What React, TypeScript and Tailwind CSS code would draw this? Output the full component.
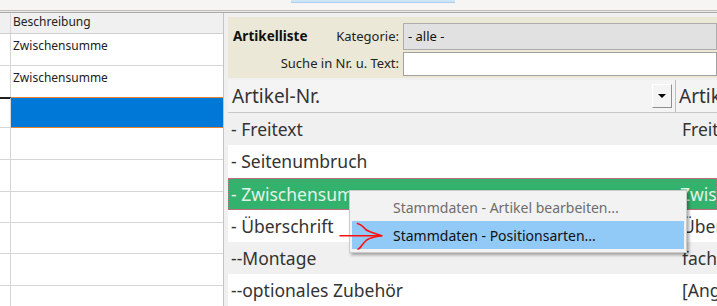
import React from "react";

const leftRows = [
  { h: "h-[32px]", text: "Zwischensumme", kind: "normal" },
  { h: "h-[31px]", text: "Zwischensumme", kind: "last" },
  { h: "h-[31px]", text: "", kind: "selected" },
  { h: "h-[32px]", text: "", kind: "normal" },
  { h: "h-[32px]", text: "", kind: "normal" },
  { h: "h-[31px]", text: "", kind: "normal" },
  { h: "h-[31px]", text: "", kind: "normal" },
  { h: "h-[32px]", text: "", kind: "normal" },
  { h: "h-[32px]", text: "", kind: "normal" },
];

const rightRows = [
  { h: "h-[32px]", bg: "bg-[#f0f0f0]", a: "- Freitext", b: "Freitext", green: false },
  { h: "h-[33px]", bg: "bg-white", a: "- Seitenumbruch", b: "", green: false },
  { h: "h-[32px]", bg: "bg-[#32b26c]", a: "- Zwischensumme", b: "Zwischensumme", green: true },
  { h: "h-[32px]", bg: "bg-white", a: "- Überschrift", b: "Überschrift", green: false },
  { h: "h-[32px]", bg: "bg-[#f0f0f0]", a: "--Montage", b: "fachgerechte Montage", green: false },
  { h: "h-[33px]", bg: "bg-white", a: "--optionales Zubehör", b: "[Angebot]", green: false },
];

export default function App() {
  return (
    <div className="relative w-[717px] h-[306px] overflow-hidden bg-[#f0f0f0] font-['Noto_Sans',sans-serif] text-[#333333]">
      {/* top strip */}
      <div className="h-[10px] bg-[#f6f5f3] flex">
        <div className="ml-[291px] w-[164px] h-[3px] bg-[#cde5f8] border-b border-[#a9d0f0]" />
      </div>
      <div className="h-[3px] border-y border-t-[#bdbdbd] border-b-[#a9a9a9] bg-[#e8e8e8]" />

      <div className="flex h-[293px]">
        {/* left panel */}
        <div className="w-[224px] shrink-0 border-r border-[#c4c4c4] bg-white flex flex-col">
          <div className="h-[21px] shrink-0 flex border-b border-[#d0d0d0] bg-[#f0f0f0] text-[12px] leading-none">
            <div className="w-[11px] border-r border-[#d6d6d6]" />
            <div className="pl-[2px] pt-[3px] text-[#222]">Beschreibung</div>
          </div>
          {leftRows.map((r, i) => (
            <div key={i} className={`${r.h} flex shrink-0`}>
              {r.kind === "selected" ? (
                <>
                  <div className="w-[11px] border-r border-[#d6d6d6] border-t-2 border-t-[#1f1f1f] border-b border-b-[#d6d6d6]" />
                  <div className="flex-1 bg-[#0078d7] border-y border-[#e8822c]" />
                </>
              ) : (
                <>
                  <div className={`w-[11px] border-r border-[#d6d6d6] ${r.kind === "last" ? "" : "border-b border-b-[#d6d6d6]"}`} />
                  <div className={`flex-1 pl-[2px] pt-[6px] text-[12px] leading-none text-[#222] ${r.kind === "last" ? "" : "border-b border-[#d6d6d6]"}`}>
                    {r.text}
                  </div>
                </>
              )}
            </div>
          ))}
        </div>

        {/* right panel */}
        <div className="flex-1 pl-[4px] pt-[4px] flex flex-col min-w-0">
          {/* beige header */}
          <div className="h-[61px] shrink-0 bg-[#ebe8d8] pt-[6px] flex flex-col gap-[2px] text-[13px]">
            <div className="flex h-[27px] items-center">
              <div className="w-[175px] shrink-0 flex items-center justify-between pl-[5px] pr-[4px]">
                <span className="font-bold text-[13.5px] text-[#111]">Artikelliste</span>
                <span className="text-[#222]">Kategorie:</span>
              </div>
              <div className="flex-1 h-[27px] bg-[#e1e1e1] border border-[#adadad] flex items-center pl-[4px] text-[#111]">
                - alle -
              </div>
            </div>
            <div className="flex h-[24px] items-center">
              <div className="w-[175px] shrink-0 text-right pr-[4px] text-[#222]">Suche in Nr. u. Text:</div>
              <div className="flex-1 h-[24px] bg-white border border-[#a0a0a0]" />
            </div>
          </div>

          {/* column header */}
          <div className="mt-[2px] h-[33px] flex bg-[#f4f4f4] border-b border-[#c8c8c8] text-[19px] shrink-0">
            <div className="w-[447px] shrink-0 flex items-center pl-[4px]">
              <span>Artikel-Nr.</span>
              <div className="ml-auto mr-[3px] w-[20px] h-[24px] bg-[#f4f4f4] border border-t-white border-l-white border-r-[#8f8f8f] border-b-[#8f8f8f] flex items-center justify-center">
                <div className="w-0 h-0 border-l-[4px] border-r-[4px] border-t-[4px] border-l-transparent border-r-transparent border-t-black" />
              </div>
            </div>
            <div className="border-l border-[#bdbdbd] w-[2px] bg-white" />
            <div className="flex items-center pl-[3px] whitespace-nowrap">Artikel</div>
          </div>

          {rightRows.map((r, i) => (
            <div
              key={i}
              className={`${r.h} shrink-0 flex items-center text-[17.5px] whitespace-nowrap ${r.bg} ${r.green ? "border border-dotted border-[#c26a86] text-[#e2f3e8]" : ""}`}
            >
              <div className={`w-[447px] shrink-0 ${r.green ? "pl-[2px]" : "pl-[3px]"}`}>{r.a}</div>
              <div className={`${r.green ? "pl-[4px]" : "pl-[7px]"}`}>{r.b}</div>
            </div>
          ))}
        </div>
      </div>

      {/* context menu */}
      <div className="absolute left-[349px] top-[190px] w-[338px] h-[63px] bg-[#f2f2f2] border border-[#cccccc] shadow-[2px_2px_3px_rgba(0,0,0,0.35)] pt-[2px] px-[2px] text-[14px]">
        <div className="h-[28px] flex items-center pl-[41px] text-[#6d6d6d]">Stammdaten - Artikel bearbeiten...</div>
        <div className="h-[28px] flex items-center pl-[41px] bg-[#91c9f7] text-[#111]">Stammdaten - Positionsarten...</div>
      </div>

      {/* red arrow */}
      <svg className="absolute left-[336px] top-[218px]" width="52" height="36" viewBox="0 0 52 36" fill="none">
        <path d="M4 17.7 L44 17.7" stroke="#ff1010" strokeWidth="1.6" strokeLinecap="round" />
        <path d="M21.5 5.5 Q25 6.5 27 8.7 Q30 12.5 34 13.8 L45.7 17.7" stroke="#ff1010" strokeWidth="1.6" strokeLinecap="round" strokeLinejoin="round" />
        <path d="M45.7 17.7 Q35 19 30.7 22 Q27.5 25 25.7 27.5 Q24 30.5 22 31" stroke="#ff1010" strokeWidth="1.6" strokeLinecap="round" strokeLinejoin="round" />
      </svg>
    </div>
  );
}
